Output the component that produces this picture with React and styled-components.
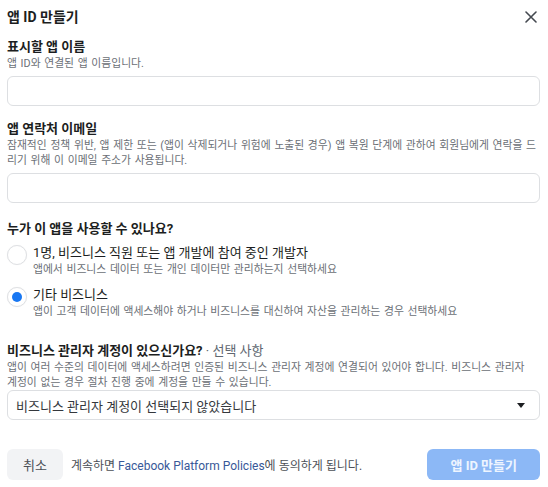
import styled, { createGlobalStyle } from "styled-components";

const GlobalStyle = createGlobalStyle`
  body {
    margin: 0;
    background: #ffffff;
    font-family: "Roboto", "Noto Sans CJK KR", sans-serif;
    color: #1c1e21;
  }
`;

const Dialog = styled.div`
  width: 548px;
  height: 487px;
  box-sizing: border-box;
  padding: 0 8px 0 7px;
  display: flex;
  flex-direction: column;
`;

const Header = styled.div`
  height: 34px;
  display: flex;
  align-items: center;
  justify-content: space-between;
`;

const Title = styled.h1`
  margin: 0;
  font-size: 14px;
  font-weight: 700;
  line-height: 20px;
`;

const Close = styled.button`
  border: none;
  background: none;
  padding: 0;
  width: 20px;
  height: 20px;
  margin-right: -1px;
  display: flex;
  align-items: center;
  justify-content: center;
  cursor: pointer;
`;

const Section = styled.div`
  margin-top: ${(p) => p.$top}px;
  display: flex;
  flex-direction: column;
`;

const Label = styled.div`
  font-size: 13px;
  font-weight: 700;
  line-height: 18px;
`;

const Optional = styled.span`
  font-weight: 400;
  color: #606770;
`;

const Help = styled.div`
  font-size: 10.8px;
  line-height: 15px;
  word-spacing: 1px;
  color: #6b6f76;
  word-break: ${(p) => (p.$keep ? "keep-all" : "normal")};
`;

const Input = styled.input`
  margin-top: 5px;
  height: 30px;
  box-sizing: border-box;
  border: 1px solid #dddfe2;
  border-radius: 6px;
  outline: none;
  padding: 0 9px;
  font: inherit;
`;

const Option = styled.label`
  display: flex;
  align-items: flex-start;
  gap: 6px;
  margin-top: ${(p) => p.$top}px;
  cursor: pointer;
`;

const Radio = styled.span`
  flex: none;
  width: 20px;
  height: 20px;
  margin-top: 1px;
  box-sizing: border-box;
  border-radius: 50%;
  border: 1px solid #dfe1e4;
  box-shadow: 0 0 1px rgba(0, 0, 0, 0.08);
  background: #ffffff;
  display: flex;
  align-items: center;
  justify-content: center;

  &::after {
    content: "";
    width: 10px;
    height: 10px;
    border-radius: 50%;
    background: ${(p) => (p.$checked ? "#1877f2" : "transparent")};
  }
`;

const OptionText = styled.div`
  display: flex;
  flex-direction: column;
`;

const OptionTitle = styled.div`
  font-size: 13px;
  line-height: 18px;
`;

const Select = styled.div`
  height: 30px;
  box-sizing: border-box;
  border: 1px solid #dddfe2;
  border-radius: 6px;
  display: flex;
  align-items: center;
  justify-content: space-between;
  padding: 0 14px 0 8px;
  font-size: 13px;
  color: #34373c;
`;

const Caret = styled.span`
  width: 0;
  height: 0;
  border-left: 4.5px solid transparent;
  border-right: 4.5px solid transparent;
  border-top: 5px solid #1c1e21;
`;

const Footer = styled.div`
  margin-top: 29px;
  display: flex;
  align-items: center;
  gap: 8px;
`;

const Button = styled.button`
  height: 31px;
  border: none;
  border-radius: 6px;
  padding: 0 ${(p) => (p.$primary ? "23px" : "16px")};
  font-family: "Roboto", "Noto Sans CJK KR", sans-serif;
  font-size: 13px;
  font-weight: ${(p) => (p.$primary ? 700 : 400)};
  background: ${(p) => (p.$primary ? "#8cb8f6" : "#f2f3f5")};
  color: ${(p) => (p.$primary ? "#eef5ff" : "#4b4f56")};
  cursor: pointer;
`;

const Terms = styled.div`
  flex: 1;
  font-size: 12px;
  color: #4b4f56;
`;

const Link = styled.a`
  color: #385898;
  text-decoration: none;
`;

export default function App() {
  return (
    <>
      <GlobalStyle />
      <Dialog>
        <Header>
          <Title>앱 ID 만들기</Title>
          <Close aria-label="닫기">
            <svg width="12" height="12" viewBox="0 0 12 12">
              <path d="M1 1L11 11M11 1L1 11" stroke="#444950" strokeWidth="1.6" strokeLinecap="round" />
            </svg>
          </Close>
        </Header>

        <Section $top={4}>
          <Label>표시할 앱 이름</Label>
          <Help>앱 ID와 연결된 앱 이름입니다.</Help>
          <Input type="text" />
        </Section>

        <Section $top={14}>
          <Label>앱 연락처 이메일</Label>
          <Help>
            잠재적인 정책 위반, 앱 제한 또는 (앱이 삭제되거나 위험에 노출된 경우) 앱 복원 단계에 관하여 회원님에게 연락을 드리기 위해 이 이메일 주소가 사용됩니다.
          </Help>
          <Input type="email" />
        </Section>

        <Section $top={17}>
          <Label>누가 이 앱을 사용할 수 있나요?</Label>
          <Option $top={6}>
            <Radio />
            <OptionText>
              <OptionTitle>1명, 비즈니스 직원 또는 앱 개발에 참여 중인 개발자</OptionTitle>
              <Help>앱에서 비즈니스 데이터 또는 개인 데이터만 관리하는지 선택하세요</Help>
            </OptionText>
          </Option>
          <Option $top={9}>
            <Radio $checked />
            <OptionText>
              <OptionTitle>기타 비즈니스</OptionTitle>
              <Help>앱이 고객 데이터에 액세스해야 하거나 비즈니스를 대신하여 자산을 관리하는 경우 선택하세요</Help>
            </OptionText>
          </Option>
        </Section>

        <Section $top={23}>
          <Label>
            비즈니스 관리자 계정이 있으신가요? <Optional>· 선택 사항</Optional>
          </Label>
          <Help $keep>
            앱이 여러 수준의 데이터에 액세스하려면 인증된 비즈니스 관리자 계정에 연결되어 있어야 합니다. 비즈니스 관리자 계정이 없는 경우 절차 진행 중에 계정을 만들 수 있습니다.
          </Help>
          <Select>
            <span>비즈니스 관리자 계정이 선택되지 않았습니다</span>
            <Caret />
          </Select>
        </Section>

        <Footer>
          <Button>취소</Button>
          <Terms>
            계속하면 <Link href="#">Facebook Platform Policies</Link>에 동의하게 됩니다.
          </Terms>
          <Button $primary>앱 ID 만들기</Button>
        </Footer>
      </Dialog>
    </>
  );
}
